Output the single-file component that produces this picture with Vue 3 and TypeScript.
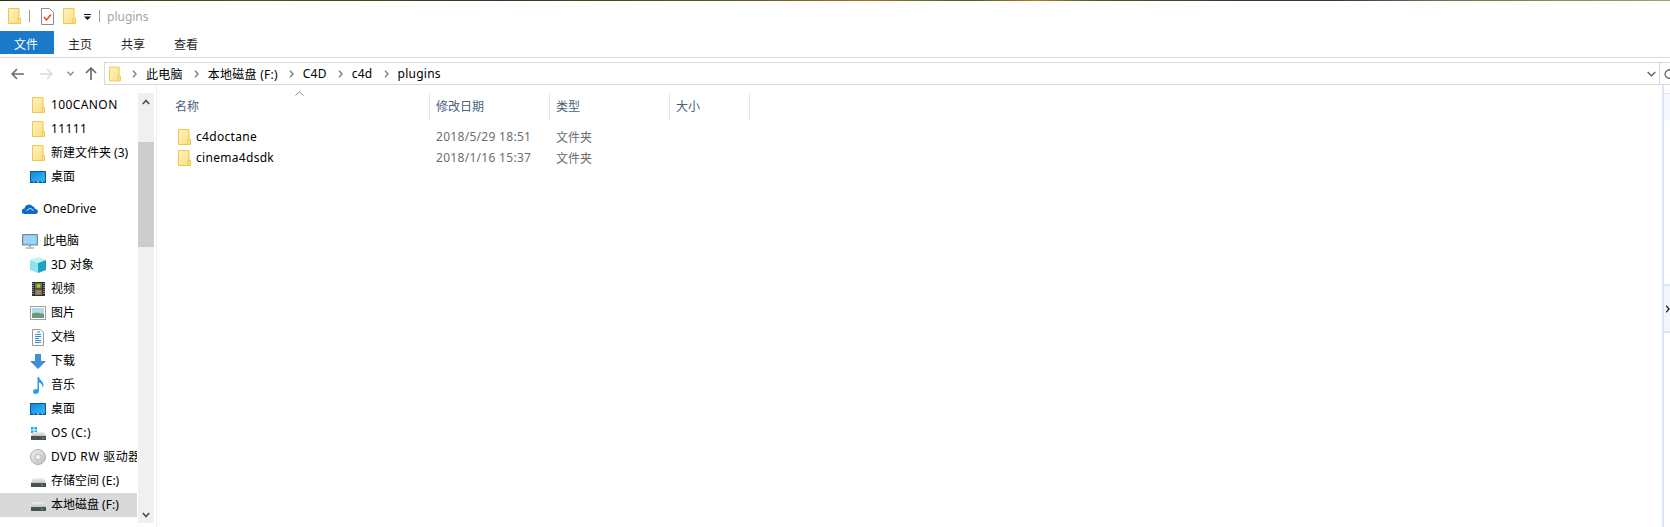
<script setup lang="ts">
interface NavItem {
  label: string
  icon: string
  indent?: boolean
  gapBefore?: boolean
  selected?: boolean
  wide?: boolean
}

const tabs = ['主页', '共享', '查看']
const crumbs = ['此电脑', '本地磁盘 (F:)', 'C4D', 'c4d', 'plugins']

const navItems: NavItem[] = [
  { label: '100CANON', icon: 'folder', indent: true, wide: true },
  { label: '11111', icon: 'folder', indent: true, wide: true },
  { label: '新建文件夹 (3)', icon: 'folder', indent: true },
  { label: '桌面', icon: 'desktop', indent: true },
  { label: 'OneDrive', icon: 'cloud', gapBefore: true },
  { label: '此电脑', icon: 'pc', gapBefore: true },
  { label: '3D 对象', icon: 'cube', indent: true },
  { label: '视频', icon: 'film', indent: true },
  { label: '图片', icon: 'picture', indent: true },
  { label: '文档', icon: 'doc', indent: true },
  { label: '下载', icon: 'download', indent: true },
  { label: '音乐', icon: 'music', indent: true },
  { label: '桌面', icon: 'desktop', indent: true },
  { label: 'OS (C:)', icon: 'osdrive', indent: true, wide: true },
  { label: 'DVD RW 驱动器', icon: 'dvd', indent: true, wide: true },
  { label: '存储空间 (E:)', icon: 'drive', indent: true },
  { label: '本地磁盘 (F:)', icon: 'drive', indent: true, selected: true },
]

const columns = ['名称', '修改日期', '类型', '大小']

const files = [
  { name: 'c4doctane', date: '2018/5/29 18:51', type: '文件夹' },
  { name: 'cinema4dsdk', date: '2018/1/16 15:37', type: '文件夹' },
]
</script>

<template>
  <div class="explorer">
    <svg class="sprite" aria-hidden="true">
      <defs>
        <linearGradient id="folderFill" x1="0" y1="0" x2="1" y2="1">
          <stop offset="0" stop-color="#fff3bd" />
          <stop offset="1" stop-color="#fbdf86" />
        </linearGradient>
        <linearGradient id="screenFill" x1="0" y1="0" x2="1" y2="1">
          <stop offset="0" stop-color="#0c8be6" />
          <stop offset="1" stop-color="#3db4f7" />
        </linearGradient>
        <linearGradient id="discFill" x1="0" y1="0" x2="1" y2="1">
          <stop offset="0" stop-color="#f2f2f2" />
          <stop offset="1" stop-color="#bdbdbd" />
        </linearGradient>
        <linearGradient id="driveTop" x1="0" y1="0" x2="0" y2="1">
          <stop offset="0" stop-color="#f0f0f0" />
          <stop offset="1" stop-color="#c4c4c4" />
        </linearGradient>
      </defs>
      <symbol id="folder" viewBox="0 0 13 16">
        <path d="M.5.500h10.500v15H.5z" fill="url(#folderFill)" stroke="#edc84e" />
        <path d="M10 10.500h2.500v5H10z" fill="#fbe595" stroke="#edc84e" />
      </symbol>
      <symbol id="desktop" viewBox="0 0 16 12">
        <rect width="16" height="12" fill="#075a9c" />
        <rect x="1" y="1" width="14" height="9.500" fill="url(#screenFill)" />
        <path d="M3 11h1M7 11h2M12 11h1" stroke="#bfe3fb" />
      </symbol>
      <symbol id="cloud" viewBox="0 0 16 10">
        <path d="M2.800 10a2.800 2.800 0 0 1-.4-5.600A4.600 4.600 0 0 1 10.600 2.300 3.600 3.600 0 0 1 13.200 5 2.500 2.500 0 0 1 13.500 10z" fill="#0a6cc9" />
        <path d="M4.500 6.500 8.200 4.300l3.500 2.200" fill="none" stroke="#fff" stroke-width=".8" />
      </symbol>
      <symbol id="pc" viewBox="0 0 16 15">
        <rect x=".5" y=".5" width="15" height="10.500" fill="#7fc6ec" stroke="#7d8a95" />
        <rect x="2" y="2" width="12" height="7.500" fill="#9bd6f4" />
        <path d="M7 11h2v2H7z" fill="#9aa4ad" />
        <path d="M4 13.500h8v1H4z" fill="#7d8a95" />
      </symbol>
      <symbol id="cube" viewBox="0 0 16 16">
        <path d="M8 0l8 3-8 3-8-3z" fill="#c4f3f5" />
        <path d="M0 3l8 3v10l-8-3z" fill="#8fe3ea" />
        <path d="M16 3L8 6v10l8-3z" fill="#1aa3c4" />
      </symbol>
      <symbol id="film" viewBox="0 0 13 14">
        <rect width="13" height="14" fill="#2b3136" />
        <rect x="3" y="1" width="7" height="5.500" fill="#5f8a3c" />
        <rect x="3" y="7.500" width="7" height="5.500" fill="#b0702e" />
        <path d="M5 2.500h3v3H5z" fill="#e0b83a" />
        <path d="M5 8.500h3v3H5z" fill="#4f9bd0" />
        <path d="M1 1v12M12 1v12" stroke="#d5dbe0" stroke-width="1" stroke-dasharray="1 1" />
      </symbol>
      <symbol id="picture" viewBox="0 0 16 14">
        <rect x=".5" y=".5" width="15" height="13" fill="#fff" stroke="#9aa3ab" />
        <rect x="2" y="2" width="12" height="6" fill="#b5d6ec" />
        <path d="M2 8c3-2 6-1 12 0v4H2z" fill="#6f9677" />
      </symbol>
      <symbol id="doc" viewBox="0 0 12 17">
        <path d="M.5.500h8l3 3v13H.5z" fill="#fafafa" stroke="#9c9c9c" />
        <path d="M5 3h3M3 5.500h6M3 7.500h6M3 9.500h4M3 11.500h6M3 13.500h6" stroke="#3b8fd3" />
      </symbol>
      <symbol id="download" viewBox="0 0 16 15">
        <path d="M5 0h6v7h5l-8 8-8-8h5z" fill="#3d8edb" />
      </symbol>
      <symbol id="music" viewBox="0 0 12 17">
        <path d="M5.500 0h1.500c.3 3 4.500 4 4.500 8 0 1-.3 2-1 2.800.3-3-1.800-4.800-3.500-5.300V14c0 1.800-1.700 3-3.500 3S1 16 1 14.500 2.500 12 4 12c.6 0 1.100.1 1.500.3z" fill="#2a9df0" />
      </symbol>
      <symbol id="osdrive" viewBox="0 0 15 13">
        <path d="M0 0h2.500v2.500H0zM3.500 0H6v2.500H3.500zM0 3.500h2.500V6H0zM3.500 3.500H6V6H3.500z" fill="#16a5ee" />
        <path d="M2 5h11l2 4H0z" fill="url(#driveTop)" />
        <path d="M0 9h15v4H0z" fill="#4b5053" />
        <path d="M11 10.500h2v1h-2z" fill="#43d35c" />
      </symbol>
      <symbol id="dvd" viewBox="0 0 16 16">
        <circle cx="8" cy="8" r="7.500" fill="url(#discFill)" stroke="#b0b0b0" />
        <circle cx="8" cy="8" r="3" fill="#e6e6e6" stroke="#c2c2c2" />
        <circle cx="8" cy="8" r="1" fill="#fff" />
      </symbol>
      <symbol id="drive" viewBox="0 0 15 9">
        <path d="M2 0h11l2 5H0z" fill="url(#driveTop)" />
        <path d="M0 5h15v4H0z" fill="#4b5053" />
        <path d="M10 6.500h2v1h-2z" fill="#43d35c" />
      </symbol>
    </svg>

    <div class="top-strip"></div>

    <!-- Title bar -->
    <div class="titlebar">
      <svg class="qa-folder"><use href="#folder" /></svg>
      <span class="qa-sep"></span>
      <svg class="qa-check" viewBox="0 0 13 17">
        <path d="M.5.500h8l4 4v12H.5z" fill="#fff" stroke="#8d8d8d" />
        <path d="M3 9l2.500 3L10 6.500" fill="none" stroke="#e4572a" stroke-width="1.600" />
      </svg>
      <svg class="qa-folder second"><use href="#folder" /></svg>
      <svg class="qa-drop" viewBox="0 0 7 6">
        <path d="M0 .5h7" stroke="#111" />
        <path d="M0 2.500h7L3.500 6z" fill="#111" />
      </svg>
      <span class="qa-sep last"></span>
      <span class="title">plugins</span>
    </div>

    <!-- Ribbon tabs -->
    <div class="tabs">
      <div class="tab file-tab">文件</div>
      <div v-for="t in tabs" :key="t" class="tab">{{ t }}</div>
    </div>

    <!-- Address row -->
    <div class="address-row">
      <div class="nav-buttons">
        <svg class="nav-back" viewBox="0 0 13 12">
          <path d="M6 1 1.200 6 6 11M1.500 6H13" fill="none" stroke="#6e6e6e" stroke-width="1.700" />
        </svg>
        <svg class="nav-forward" viewBox="0 0 13 12">
          <path d="M7 1l4.800 5L7 11M11.500 6H0" fill="none" stroke="#dcdcdc" stroke-width="1.700" />
        </svg>
        <svg class="nav-recent" viewBox="0 0 7 5">
          <path d="M.5.800 3.500 4l3-3.200" fill="none" stroke="#8a8a8a" stroke-width="1.300" />
        </svg>
        <svg class="nav-up" viewBox="0 0 12 13">
          <path d="M1 6l5-5 5 5M6 1.500V13" fill="none" stroke="#6e6e6e" stroke-width="1.700" />
        </svg>
      </div>
      <div class="address-box">
        <svg class="addr-folder"><use href="#folder" /></svg>
        <div v-for="c in crumbs" :key="c" class="crumb">
          <svg class="crumb-chevron" viewBox="0 0 5 8">
            <path d="M1 .8 4 4 1 7.200" fill="none" stroke="#808080" stroke-width="1.400" />
          </svg>
          <span>{{ c }}</span>
        </div>
        <svg class="addr-drop" viewBox="0 0 9 6">
          <path d="M.7 1 4.500 4.800 8.300 1" fill="none" stroke="#707070" stroke-width="1.600" />
        </svg>
        <div class="refresh">
          <svg viewBox="0 0 8 12">
            <path d="M7 3.200A4.500 4.500 0 0 0 1 7a4.500 4.500 0 0 0 7 3.500" fill="none" stroke="#707070" stroke-width="1.400" />
            <path d="M3.500 3.500H8V0z" fill="#707070" />
          </svg>
        </div>
      </div>
    </div>

    <div class="body">
      <!-- Navigation pane -->
      <aside class="sidebar">
        <nav class="tree">
          <div
            v-for="item in navItems"
            :key="item.label + item.icon"
            class="tree-row"
            :class="{ indent: item.indent, spaced: item.gapBefore, selected: item.selected, wide: item.wide }"
          >
            <span class="tree-icon"><svg :class="'ic-' + item.icon"><use :href="'#' + item.icon" /></svg></span>
            <span class="tree-label">{{ item.label }}</span>
          </div>
        </nav>
        <div class="scrollbar">
          <div class="scroll-btn">
            <svg viewBox="0 0 8 6"><path d="M.8 5 4 1.500 7.200 5" fill="none" stroke="#505050" stroke-width="1.700" /></svg>
          </div>
          <div class="scroll-thumb"></div>
          <div class="scroll-fill"></div>
          <div class="scroll-btn">
            <svg viewBox="0 0 8 6"><path d="M.8 1 4 4.500 7.200 1" fill="none" stroke="#505050" stroke-width="1.700" /></svg>
          </div>
        </div>
      </aside>

      <!-- File list -->
      <main class="content">
        <div class="list-header">
          <svg class="sort-arrow" viewBox="0 0 9 5">
            <path d="M.5 4.500 4.500.8l4 3.700" fill="none" stroke="#8a8a8a" />
          </svg>
          <div v-for="c in columns" :key="c" class="col-head">{{ c }}</div>
        </div>
        <div v-for="f in files" :key="f.name" class="file-row">
          <div class="file-name">
            <svg class="file-folder"><use href="#folder" /></svg>
            <span>{{ f.name }}</span>
          </div>
          <div class="file-meta date">{{ f.date }}</div>
          <div class="file-meta">{{ f.type }}</div>
        </div>
      </main>

      <!-- Collapsed side pane -->
      <div class="rail">
        <div class="rail-top"></div>
        <div class="rail-handle">
          <svg viewBox="0 0 5 10"><path d="M0 .8 3.800 5 0 9.200" fill="none" stroke="#111" stroke-width="1.500" /></svg>
        </div>
      </div>
    </div>
  </div>
</template>

<style>
html,
body {
  margin: 0;
  background: #fff;
  overflow: hidden;
}
</style>

<style scoped>
.explorer {
  width: 1670px;
  height: 527px;
  display: flex;
  flex-direction: column;
  background: #fff;
  color: #000;
  font-family: 'Noto Sans', 'Noto Sans CJK SC', sans-serif;
  font-size: 12px;
  overflow: hidden;
}

.sprite {
  display: block;
  width: 0;
  height: 0;
}

.top-strip {
  height: 1px;
  flex: none;
  background: linear-gradient(
    90deg,
    #2f2a18 0%,
    #5a4c20 15%,
    #3a3520 30%,
    #6b5a20 45%,
    #9a7d1e 52%,
    #55582a 58%,
    #a8861e 62%,
    #4f5526 66%,
    #3a3a2c 74%,
    #3a3732 80%,
    #7a6c50 86%,
    #ab9a72 100%
  );
}

.titlebar {
  height: 30px;
  flex: none;
  display: flex;
  align-items: center;
  padding-left: 8px;
}

.qa-folder {
  width: 13px;
  height: 16px;
}

.qa-folder.second {
  margin-left: 9px;
}

.qa-sep {
  width: 1px;
  height: 12px;
  margin-left: 8px;
  background: #9a9a9a;
}

.qa-sep.last {
  margin-left: 8px;
}

.qa-check {
  width: 13px;
  height: 17px;
  margin-left: 11px;
}

.qa-drop {
  width: 7px;
  height: 6px;
  margin-left: 8px;
  margin-top: 2px;
}

.title {
  margin-left: 7px;
  color: #a3a3a3;
  font-size: 12px;
}

.tabs {
  height: 23px;
  flex: none;
  display: flex;
  margin-bottom: 3px;
}

.tab {
  display: flex;
  align-items: center;
  padding: 2px 15px 0 14px;
  color: #262626;
}

.file-tab {
  width: 54px;
  box-sizing: border-box;
  padding: 2px 0 0 14px;
  background: #1979ca;
  color: #fff;
}

.address-row {
  flex: none;
  height: 28px;
  box-sizing: border-box;
  display: flex;
  align-items: flex-end;
  border-top: 1px solid #d9d9d9;
}

.nav-buttons {
  width: 104px;
  height: 23px;
  flex: none;
  display: flex;
  align-items: center;
  padding-left: 11px;
  box-sizing: border-box;
}

.nav-back,
.nav-forward {
  width: 13px;
  height: 12px;
}

.nav-forward {
  margin-left: 16px;
}

.nav-recent {
  width: 7px;
  height: 5px;
  margin-left: 14px;
}

.nav-up {
  width: 12px;
  height: 13px;
  margin-left: 11px;
}

.address-box {
  flex: 1;
  height: 23px;
  box-sizing: border-box;
  display: flex;
  align-items: center;
  padding-left: 4px;
  border: 1px solid #d9d9d9;
  border-right: none;
}

.addr-folder {
  width: 12px;
  height: 16px;
}

.crumb {
  display: flex;
  align-items: center;
  letter-spacing: 0.25px;
}

.crumb-chevron {
  width: 5px;
  height: 8px;
  margin: 0 9px 0 11px;
}

.addr-drop {
  width: 9px;
  height: 6px;
  margin-left: auto;
  margin-right: 3px;
}

.refresh {
  width: 11px;
  height: 100%;
  flex: none;
  box-sizing: border-box;
  border-left: 1px solid #d9d9d9;
  padding: 4px 0 0 4px;
  overflow: hidden;
}

.refresh svg {
  display: block;
  width: 8px;
  height: 12px;
}

.body {
  flex: 1;
  min-height: 0;
  display: flex;
}

.sidebar {
  width: 154px;
  flex: none;
  display: flex;
  padding-top: 8px;
  box-sizing: border-box;
}

.tree {
  width: 138px;
  flex: none;
}

.tree-row {
  height: 24px;
  width: 137px;
  display: flex;
  align-items: center;
  white-space: nowrap;
  overflow: hidden;
}

.tree-row.spaced {
  margin-top: 8px;
}

.tree-row.selected {
  background: #d9d9d9;
}

.tree-label {
  margin-bottom: 2px;
}

.tree-row.wide .tree-label {
  letter-spacing: 0.4px;
}

.tree-icon {
  width: 16px;
  height: 17px;
  flex: none;
  margin-left: 22px;
  margin-right: 5px;
  display: flex;
  align-items: center;
  justify-content: center;
}

.tree-row.indent .tree-icon {
  margin-left: 30px;
}

.tree-icon svg {
  display: block;
  width: 16px;
  height: 16px;
}

.tree-icon .ic-folder {
  width: 13px;
  height: 16px;
}

.tree-icon .ic-desktop {
  height: 12px;
}

.tree-icon .ic-cloud {
  height: 10px;
}

.tree-icon .ic-pc {
  height: 15px;
}

.tree-icon .ic-film {
  width: 13px;
  height: 14px;
}

.tree-icon .ic-picture {
  height: 14px;
}

.tree-icon .ic-doc {
  width: 12px;
  height: 17px;
}

.tree-icon .ic-download {
  height: 15px;
}

.tree-icon .ic-music {
  width: 12px;
  height: 17px;
}

.tree-icon .ic-osdrive {
  width: 15px;
  height: 13px;
}

.tree-icon .ic-drive {
  width: 15px;
  height: 9px;
  margin-top: 3px;
}

.scrollbar {
  width: 16px;
  flex: none;
  height: 430px;
  display: flex;
  flex-direction: column;
  background: #f0f0f0;
}

.scroll-btn {
  height: 17px;
  flex: none;
  display: flex;
  align-items: center;
  justify-content: center;
}

.scroll-btn svg {
  width: 8px;
  height: 6px;
}

.scroll-thumb {
  height: 105px;
  flex: none;
  margin-top: 32px;
  background: #cdcdcd;
}

.scroll-fill {
  flex: 1;
}

.content {
  flex: 1;
  min-width: 0;
  margin-left: 2px;
  padding-top: 9px;
  border-left: 1px solid #f0f0f0;
}

.list-header {
  position: relative;
  height: 26px;
  display: grid;
  grid-template-columns: 273px 120px 120px 80px;
  margin-bottom: 6px;
}

.sort-arrow {
  position: absolute;
  left: 138px;
  top: -3px;
  width: 9px;
  height: 5px;
}

.col-head {
  display: flex;
  align-items: center;
  padding: 0 0 2px 6px;
  border-right: 1px solid #e5e5e5;
  color: #4c607a;
}

.col-head:first-of-type {
  padding-left: 18px;
}

.file-row {
  height: 21px;
  display: grid;
  grid-template-columns: 273px 120px 120px;
  align-items: center;
}

.file-name {
  display: flex;
  align-items: center;
  gap: 5px;
  padding-left: 21px;
  letter-spacing: 0.3px;
}

.file-folder {
  width: 13px;
  height: 16px;
  flex: none;
}

.file-meta {
  padding-left: 6px;
  color: #6d6d6d;
}

.file-meta.date {
  letter-spacing: 0.3px;
}

.rail {
  width: 8px;
  flex: none;
  box-sizing: border-box;
  display: flex;
  flex-direction: column;
  padding-top: 8px;
  border-left: 2px solid #dbe6f6;
}

.rail-top {
  height: 26px;
  flex: none;
  background: #f5f8fd;
  border-top: 1px solid #dbe6f6;
}

.rail-handle {
  height: 49px;
  flex: none;
  margin-top: 164px;
  box-sizing: border-box;
  display: flex;
  align-items: center;
  padding-left: 2px;
  background: #f3f6fc;
  border-top: 2px solid #dbe6f6;
  border-bottom: 2px solid #dbe6f6;
}

.rail-handle svg {
  width: 5px;
  height: 10px;
}
</style>
